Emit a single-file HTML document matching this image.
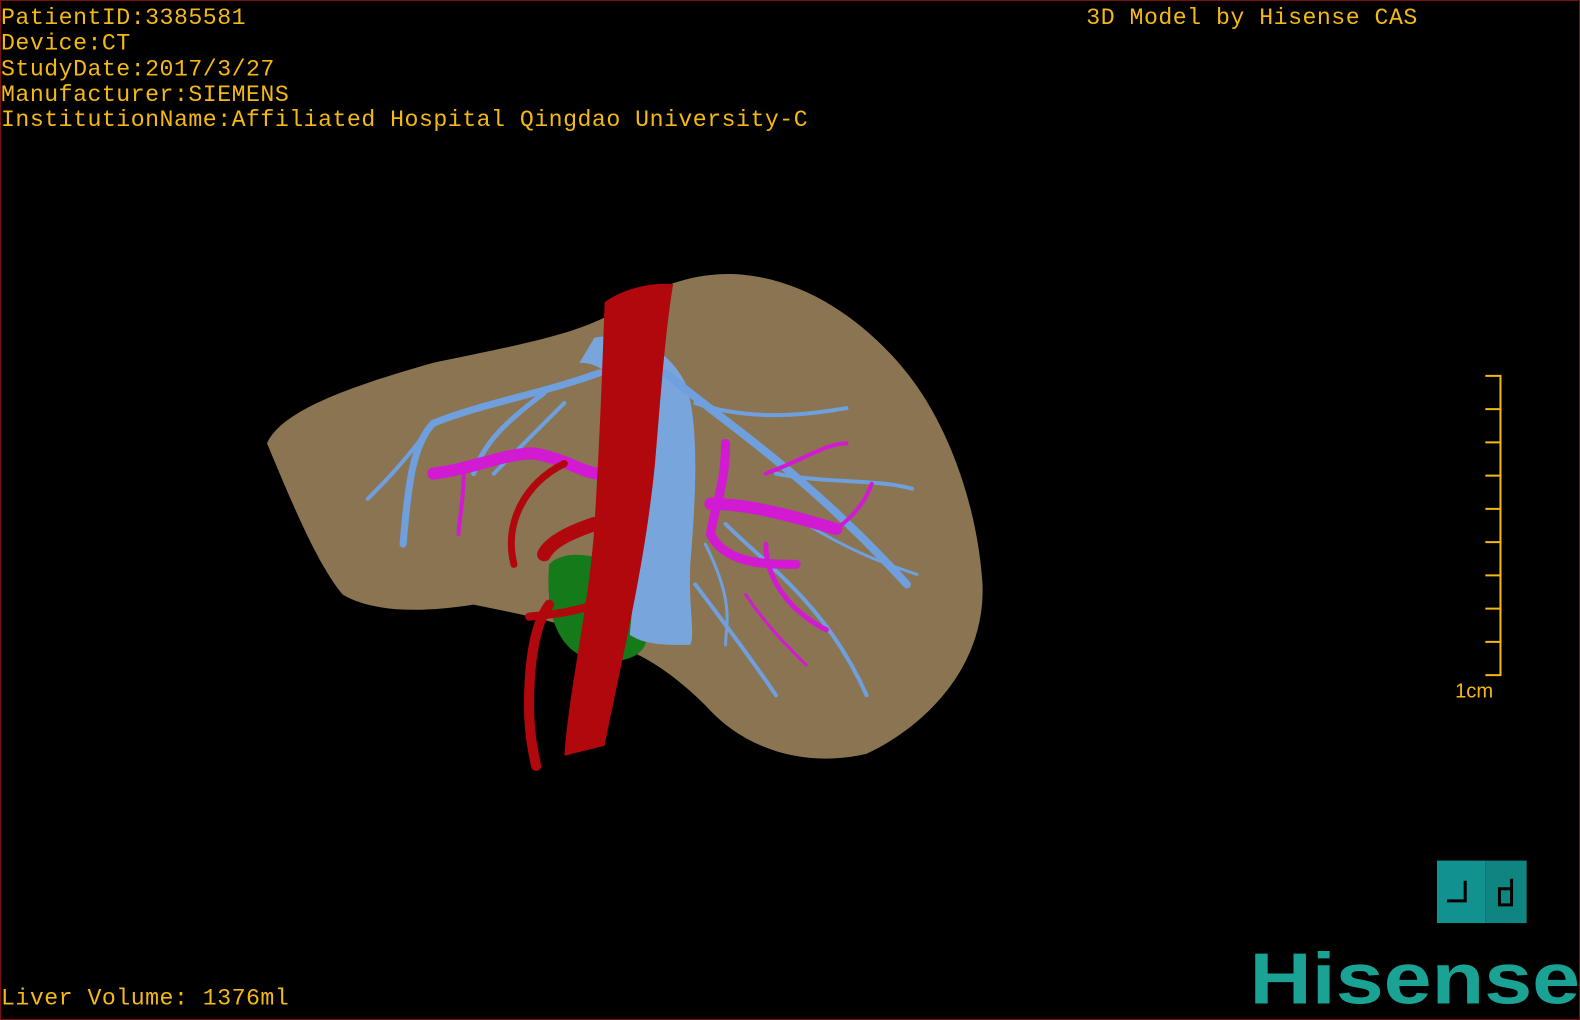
<!DOCTYPE html>
<html><head><meta charset="utf-8">
<style>
html,body{margin:0;padding:0;background:#000;}
body{width:1580px;height:1020px;position:relative;overflow:hidden;}
.frame{position:absolute;left:0;top:0;width:1578px;height:1018px;border:1px solid #7a1010;z-index:2;}
.wrap{position:absolute;left:0;top:0;width:1568px;height:1012px;transform:scale(1.0077);transform-origin:0 0;}
.t{position:absolute;color:#f5b915;font-family:"Liberation Mono",monospace;font-size:23px;line-height:25.3px;letter-spacing:0.5px;white-space:pre;}
</style></head><body>
<div class="frame"></div>
<div class="wrap">
<div class="t" style="left:1px;top:6px">PatientID:3385581<br>Device:CT<br>StudyDate:2017/3/27<br>Manufacturer:SIEMENS<br>InstitutionName:Affiliated Hospital Qingdao University-C</div>
<div class="t" style="left:1078px;top:6px">3D Model by Hisense CAS</div>
<div class="t" style="left:1px;top:979px">Liver Volume: 1376ml</div>
<svg width="1568" height="1012" style="position:absolute;left:0;top:0">
<path d="M265,440 C280,405 360,380 430,360 C500,345 560,335 600,315 C640,290 680,270 730,272 C800,276 860,320 900,370 C940,420 970,500 975,580 C978,660 920,720 860,748 C800,762 740,745 700,700 C670,670 640,650 610,640 C570,620 520,610 470,600 C420,608 370,608 340,590 C315,560 290,500 265,440 Z" fill="#8a7452"/>
<path d="M545,560 C560,545 590,550 610,560 L640,620 C650,650 620,660 590,655 C560,650 540,620 545,560 Z" fill="#157a1a"/>
<path d="M590,335 C620,330 660,340 680,380 C695,420 690,500 685,560 C683,600 690,630 685,640 C660,640 640,640 625,630 C630,570 640,500 630,430 C620,380 600,360 575,360 Z" fill="#78a6dc"/>
<g stroke="#6f9fdc" fill="none" stroke-linecap="round">
<path d="M595,370 C540,390 480,400 430,420 C410,440 405,480 400,540" stroke-width="7"/>
<path d="M540,390 C500,420 480,440 470,470" stroke-width="5"/>
<path d="M430,420 C400,460 380,480 365,495" stroke-width="4"/>
<path d="M560,400 C520,440 500,460 490,470" stroke-width="4"/>
<path d="M660,370 C720,420 800,470 900,580" stroke-width="8"/>
<path d="M690,400 C750,420 810,410 840,405" stroke-width="4"/>
<path d="M770,470 C820,480 870,475 905,485" stroke-width="4"/>
<path d="M720,520 C760,560 820,600 860,690" stroke-width="4"/>
<path d="M690,580 C720,620 750,660 770,690" stroke-width="4"/>
<path d="M700,540 C730,600 720,620 720,640" stroke-width="3"/>
<path d="M800,520 C850,550 880,560 910,570" stroke-width="3"/>
</g>
<g stroke="#d21ad2" fill="none" stroke-linecap="round">
<path d="M430,470 C470,465 500,450 530,450 C560,455 580,470 595,470" stroke-width="12"/>
<path d="M705,500 C740,500 780,510 830,525" stroke-width="12"/>
<path d="M720,440 C720,480 710,500 705,530 C720,560 760,560 790,560" stroke-width="9"/>
<path d="M760,540 C760,580 790,610 820,625" stroke-width="5"/>
<path d="M460,470 C460,500 455,520 455,530" stroke-width="4"/>
<path d="M760,470 C800,455 820,440 840,440" stroke-width="4"/>
<path d="M830,525 C850,510 860,495 865,480" stroke-width="4"/>
<path d="M740,590 C760,620 780,640 800,660" stroke-width="3"/>
</g>
<path d="M600,300 C620,285 650,280 668,282 C660,330 655,400 650,460 C640,560 620,640 600,740 L560,750 C565,680 585,600 590,520 C595,440 598,360 600,300 Z" fill="#b0080c"/>
<g stroke="#b0080c" fill="none" stroke-linecap="round">
<path d="M590,520 C560,530 545,540 540,550" stroke-width="14"/>
<path d="M560,460 C520,480 500,520 510,560" stroke-width="7"/>
<path d="M545,600 C530,620 525,660 525,700 C525,730 530,750 532,760" stroke-width="10"/>
<path d="M590,600 C560,610 540,610 525,612" stroke-width="8"/>
</g>
<g stroke="#f5b915" stroke-width="2">
<line x1="1489" y1="373" x2="1489" y2="670"/>
<line x1="1474" y1="373" x2="1490" y2="373"/>
<line x1="1474" y1="406" x2="1490" y2="406"/>
<line x1="1474" y1="439" x2="1490" y2="439"/>
<line x1="1474" y1="472" x2="1490" y2="472"/>
<line x1="1474" y1="505" x2="1490" y2="505"/>
<line x1="1474" y1="538" x2="1490" y2="538"/>
<line x1="1474" y1="571" x2="1490" y2="571"/>
<line x1="1474" y1="604" x2="1490" y2="604"/>
<line x1="1474" y1="637" x2="1490" y2="637"/>
<line x1="1474" y1="670" x2="1490" y2="670"/>
</g>
<text x="1444" y="692" fill="#f5b915" font-family="Liberation Sans, sans-serif" font-size="20">1cm</text>
<rect x="1426" y="854" width="48" height="62" fill="#11918f"/>
<rect x="1474" y="854" width="41" height="62" fill="#0f8582"/>
<path d="M1436,894 H1454 V874" stroke="#000" stroke-width="3" fill="none"/>
<path d="M1500,872 V898 H1488 V882 H1500" stroke="#000" stroke-width="3" fill="none"/>
<text x="1240" y="996" fill="#1aa294" font-family="Liberation Sans, sans-serif" font-weight="bold" font-size="72" textLength="328" lengthAdjust="spacingAndGlyphs">Hisense</text>
</svg>
</div>
</body></html>
